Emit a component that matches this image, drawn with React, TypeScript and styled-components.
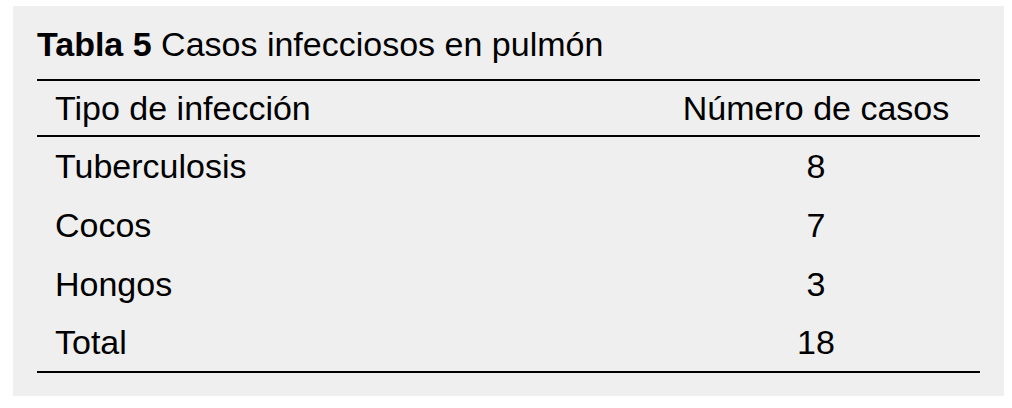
import { createGlobalStyle, styled } from 'styled-components'

const GlobalStyle = createGlobalStyle`
  html, body {
    margin: 0;
    padding: 0;
    background: #ffffff;
  }
  body {
    font-family: "Liberation Sans", Arial, sans-serif;
    color: #000000;
  }
`

const Page = styled.div`
  padding: 6px 8px 12px 13px;
`

const Panel = styled.figure`
  box-sizing: border-box;
  margin: 0;
  width: 991px;
  height: 390px;
  padding: 18px 24px 0 24px;
  background: #efefef;
`

const Caption = styled.figcaption`
  font-size: 34px;
  line-height: 40px;
  height: 40px;
  margin-bottom: 15px;
  white-space: nowrap;
`

const Label = styled.b`
  font-weight: 700;
`

const Table = styled.table`
  width: 100%;
  border-collapse: collapse;
  border-spacing: 0;
  font-size: 34px;
`

const HeadRow = styled.tr`
  border-top: 2px solid #000;
  border-bottom: 2px solid #000;
`

const BodyRow = styled.tr<{ $last?: boolean }>`
  border-bottom: ${(p) => (p.$last ? '2px solid #000' : 'none')};
`

const Cell = styled.td<{ $num?: boolean; $head?: boolean }>`
  box-sizing: border-box;
  padding: 0 0 0 ${(p) => (p.$num ? '0' : '18px')};
  width: ${(p) => (p.$num ? '328px' : 'auto')};
  height: ${(p) => (p.$head ? '56px' : '59px')};
  line-height: 40px;
  text-align: ${(p) => (p.$num ? 'center' : 'left')};
  font-weight: 400;
  vertical-align: middle;
  white-space: nowrap;
`

const rows = [
  { tipo: 'Tuberculosis', casos: 8 },
  { tipo: 'Cocos', casos: 7 },
  { tipo: 'Hongos', casos: 3 },
  { tipo: 'Total', casos: 18 },
]

export default function App() {
  return (
    <>
      <GlobalStyle />
      <Page>
        <Panel>
          <Caption>
            <Label>Tabla 5</Label> Casos infecciosos en pulmón
          </Caption>
          <Table>
            <thead>
              <HeadRow>
                <Cell as="th" $head>
                  Tipo de infección
                </Cell>
                <Cell as="th" $head $num>
                  Número de casos
                </Cell>
              </HeadRow>
            </thead>
            <tbody>
              {rows.map((r, i) => (
                <BodyRow key={r.tipo} $last={i === rows.length - 1}>
                  <Cell>{r.tipo}</Cell>
                  <Cell $num>{r.casos}</Cell>
                </BodyRow>
              ))}
            </tbody>
          </Table>
        </Panel>
      </Page>
    </>
  )
}
